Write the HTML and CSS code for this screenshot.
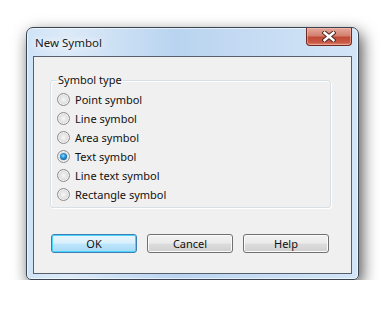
FILE: index.html
```html
<!DOCTYPE html>
<html lang="en">
<head>
    <meta charset="UTF-8">
    <title>New Symbol</title>
    <link rel="stylesheet" href="styles.css">
</head>
<body>
    <div class="dialog">
        <header class="title-bar">
            <span class="title-text">New Symbol</span>
            <button class="close-button" aria-label="Close">
                <svg width="14" height="11" viewBox="0 0 14 11">
                    <path d="M2.5 1.8 L11.5 9.2 M11.5 1.8 L2.5 9.2" stroke="#4a2420" stroke-width="4.4" stroke-linecap="square" fill="none"/>
                    <path d="M2.5 1.8 L11.5 9.2 M11.5 1.8 L2.5 9.2" stroke="#ffffff" stroke-width="2.4" stroke-linecap="square" fill="none"/>
                </svg>
            </button>
        </header>

        <main class="client">
            <fieldset class="group-box">
                <legend class="group-label">Symbol type</legend>
                <label class="radio-row"><input type="radio" name="symbolType"><span class="radio-mark"></span>Point symbol</label>
                <label class="radio-row"><input type="radio" name="symbolType"><span class="radio-mark"></span>Line symbol</label>
                <label class="radio-row"><input type="radio" name="symbolType"><span class="radio-mark"></span>Area symbol</label>
                <label class="radio-row"><input type="radio" name="symbolType" checked><span class="radio-mark"></span>Text symbol</label>
                <label class="radio-row"><input type="radio" name="symbolType"><span class="radio-mark"></span>Line text symbol</label>
                <label class="radio-row"><input type="radio" name="symbolType"><span class="radio-mark"></span>Rectangle symbol</label>
            </fieldset>

            <div class="button-row">
                <button class="push-button default-button">OK</button>
                <button class="push-button">Cancel</button>
                <button class="push-button">Help</button>
            </div>
        </main>
    </div>
</body>
</html>
```

FILE: styles.css
```css
/* Halaman dan jendela dialog */
body {
    margin: 0;
    padding: 27px 0 0 26px;
    background: #ffffff;
    font-family: "Noto Sans", "Open Sans", sans-serif;
    font-size: 11px;
    color: #000000;
}

.dialog {
    width: 331px;
    border: 1px solid #3a4350;
    border-radius: 7px 7px 5px 5px;
    background: linear-gradient(to right, #cfe3f7 0%, #dceaf8 12%, #b9d4f0 45%, #c6dcf3 70%, #d3e5f7 100%);
    box-shadow: inset 0 0 0 1px rgba(255, 255, 255, 0.6), 3px 6px 16px rgba(0, 0, 0, 0.7);
    display: flex;
    flex-direction: column;
}

/* Title bar */
.title-bar {
    height: 28px;
    display: flex;
    align-items: flex-start;
    justify-content: space-between;
    padding: 0 6px 0 8px;
}

.title-text {
    margin-top: 8px;
    line-height: 14px;
    font-size: 11.5px;
    color: #1a1a1a;
    text-shadow: 0 0 6px #ffffff, 0 0 8px #ffffff;
}

.close-button {
    width: 46px;
    height: 18px;
    margin: 0;
    padding: 0;
    border: 1px solid #6e2b24;
    border-top: none;
    border-radius: 0 0 4px 4px;
    background: linear-gradient(to bottom, #e7a99c 0%, #d2806f 45%, #c04a36 55%, #c95a45 85%, #e08f78 100%);
    box-shadow: inset 0 0 0 1px rgba(255, 200, 190, 0.45);
    display: flex;
    align-items: center;
    justify-content: center;
}

/* Area isi */
.client {
    margin: 0 6px 5px 6px;
    border: 1px solid #56606c;
    background: #f0f0f0;
    padding: 16px 20px 20px 16px;
}

.group-box {
    margin: 0;
    padding: 3px 0 3px 6px;
    border: 1px solid #d5dfe5;
    border-radius: 3px;
    box-shadow: inset 1px 1px 0 #ffffff, 1px 1px 0 #ffffff;
    display: flex;
    flex-direction: column;
}

.group-label {
    padding: 0 1px;
    margin-left: 0;
    line-height: 14px;
    color: #111111;
}

.radio-row {
    height: 19px;
    display: flex;
    align-items: center;
    color: #111111;
}

.radio-row input {
    display: none;
}

.radio-mark {
    width: 11px;
    height: 11px;
    margin-right: 5px;
    border: 1px solid #8d8d8d;
    border-radius: 50%;
    background: radial-gradient(circle at 50% 50%, #f6f6f6 0%, #e4e4e4 45%, #cfcfcf 70%, #f2f2f2 100%);
    box-shadow: inset 0 0 0 1px #f4f4f4;
    position: relative;
}

.radio-row input:checked + .radio-mark::after {
    content: "";
    position: absolute;
    left: 2px;
    top: 2px;
    width: 7px;
    height: 7px;
    border-radius: 50%;
    background: radial-gradient(circle at 45% 40%, #9fe3ff 0%, #2d9be0 35%, #0d5f9e 75%, #18476f 100%);
}

/* Tombol */
.button-row {
    margin-top: 26px;
    display: flex;
    gap: 10px;
    padding-left: 1px;
}

.push-button {
    width: 86px;
    height: 19px;
    padding: 0;
    border: 1px solid #707070;
    border-radius: 3px;
    background: linear-gradient(to bottom, #f2f2f2 0%, #ebebeb 48%, #dddddd 52%, #cfcfcf 100%);
    box-shadow: inset 0 0 0 1px #fbfbfb;
    font-family: inherit;
    font-size: 11px;
    line-height: 15px;
    color: #111111;
}

.default-button {
    border-color: #3c7fb1;
    background: linear-gradient(to bottom, #eaf6fd 0%, #d9f0fc 48%, #bee6fd 52%, #a7d9f5 100%);
    box-shadow: inset 0 0 0 1px #48d4ff;
}
```
